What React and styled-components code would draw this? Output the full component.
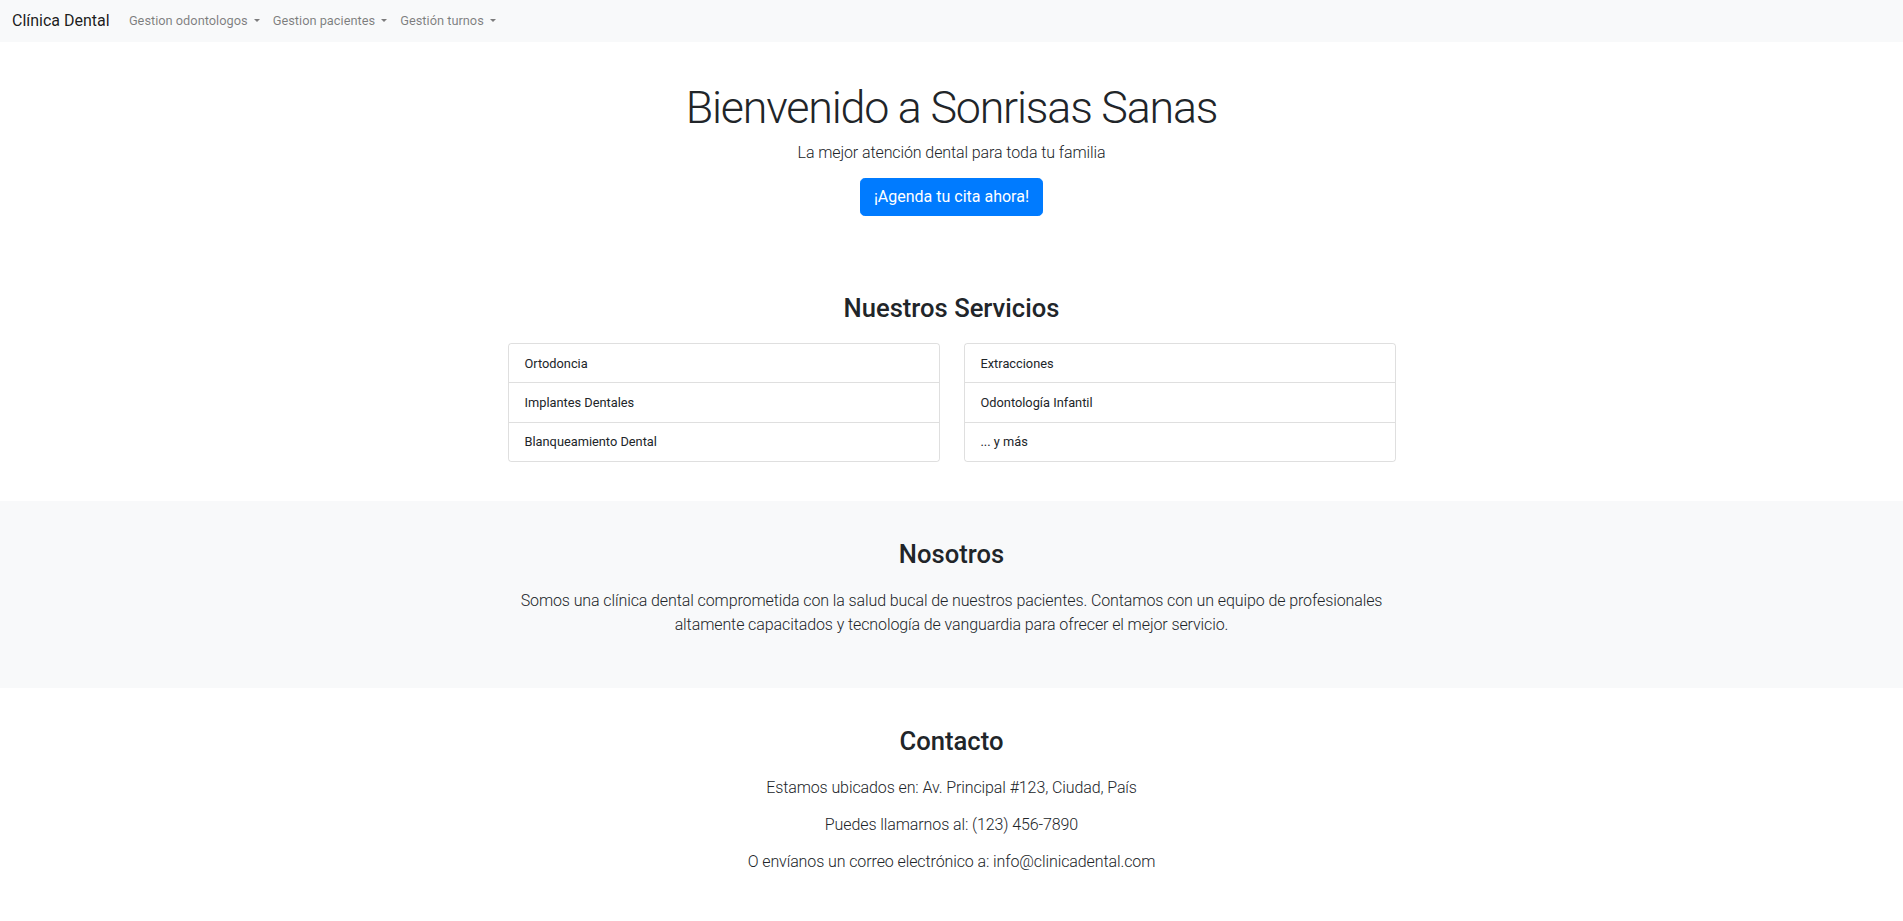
import React from "react";
import styled, { createGlobalStyle } from "styled-components";

const GlobalStyle = createGlobalStyle`
  * { box-sizing: border-box; }
  body {
    margin: 0;
    font-family: Roboto, "Liberation Sans", sans-serif;
    font-size: 12.8px;
    line-height: 1.5;
    color: #212529;
    background: #fff;
  }
`;

const services = [
  ["Ortodoncia", "Implantes Dentales", "Blanqueamiento Dental"],
  ["Extracciones", "Odontología Infantil", "... y más"],
];

const menus = ["Gestion odontologos", "Gestion pacientes", "Gestión turnos"];

export default function App() {
  return (
    <>
      <GlobalStyle />
      <Navbar>
        <Brand href="#">Clínica Dental</Brand>
        <NavList>
          {menus.map((m) => (
            <NavLink key={m} href="#">
              {m}
            </NavLink>
          ))}
        </NavList>
      </Navbar>

      <Hero>
        <Title>Bienvenido a Sonrisas Sanas</Title>
        <Lead>La mejor atención dental para toda tu familia</Lead>
        <CtaButton href="#">¡Agenda tu cita ahora!</CtaButton>
      </Hero>

      <Section>
        <Container>
          <SectionTitle>Nuestros Servicios</SectionTitle>
          <ServiceGrid>
            {services.map((col, i) => (
              <ListGroup key={i}>
                {col.map((s) => (
                  <ListItem key={s}>{s}</ListItem>
                ))}
              </ListGroup>
            ))}
          </ServiceGrid>
        </Container>
      </Section>

      <Section $bg="#f8f9fa">
        <Container>
          <SectionTitle>Nosotros</SectionTitle>
          <Lead>
            Somos una clínica dental comprometida con la salud bucal de nuestros pacientes.
            Contamos con un equipo de profesionales altamente capacitados y tecnología de
            vanguardia para ofrecer el mejor servicio.
          </Lead>
        </Container>
      </Section>

      <Section>
        <Container>
          <SectionTitle>Contacto</SectionTitle>
          <Lead>Estamos ubicados en: Av. Principal #123, Ciudad, País</Lead>
          <Lead>Puedes llamarnos al: (123) 456-7890</Lead>
          <Lead>O envíanos un correo electrónico a: info@clinicadental.com</Lead>
        </Container>
      </Section>
    </>
  );
}

const Navbar = styled.nav`
  display: flex;
  align-items: center;
  height: 41.6px;
  padding: 0 12px;
  background-color: #f8f9fa;
`;

const Brand = styled.a`
  font-size: 16px;
  line-height: 1.5;
  color: rgba(0, 0, 0, 0.9);
  text-decoration: none;
  margin-right: 12.8px;
  white-space: nowrap;
`;

const NavList = styled.div`
  display: flex;
  align-items: center;
`;

const NavLink = styled.a`
  padding: 6.4px;
  color: rgba(0, 0, 0, 0.5);
  text-decoration: none;
  white-space: nowrap;

  &::after {
    content: "";
    display: inline-block;
    margin-left: 0.5em;
    vertical-align: 0.255em;
    border-top: 0.3em solid;
    border-right: 0.3em solid transparent;
    border-left: 0.3em solid transparent;
  }
`;

const Hero = styled.header`
  text-align: center;
  padding: 39px 12px 38.4px;
`;

const Title = styled.h1`
  margin: 0 0 6.4px;
  font-size: 44.8px;
  font-weight: 300;
  line-height: 1.2;
  letter-spacing: -1.2px;
`;

const Lead = styled.p`
  margin: 0 0 12.8px;
  font-size: 16px;
  font-weight: 300;
  line-height: 1.5;
  text-align: center;
  letter-spacing: -0.1px;
`;

const CtaButton = styled.a`
  display: inline-block;
  padding: 6.4px 12.8px;
  font-size: 16px;
  line-height: 1.5;
  color: #fff;
  background-color: #007bff;
  border: 1px solid #007bff;
  border-radius: 4.8px;
  text-decoration: none;
`;

const Section = styled.section`
  padding: 38.4px 0;
  background-color: ${(p) => p.$bg || "transparent"};
`;

const Container = styled.div`
  max-width: 912px;
  margin: 0 auto;
  padding: 0 12px;
`;

const SectionTitle = styled.h2`
  margin: 0 0 19.2px;
  font-size: 25.6px;
  font-weight: 500;
  line-height: 1.2;
  text-align: center;
`;

const ServiceGrid = styled.div`
  display: grid;
  grid-template-columns: 1fr 1fr;
  gap: 24px;
`;

const ListGroup = styled.ul`
  display: flex;
  flex-direction: column;
  margin: 0;
  padding: 0;
  list-style: none;
  border: 1px solid rgba(0, 0, 0, 0.125);
  border-radius: 3.2px;
`;

const ListItem = styled.li`
  padding: 9.6px 16px;
  font-size: 12.8px;
  line-height: 1.5;

  & + & {
    border-top: 1px solid rgba(0, 0, 0, 0.125);
  }
`;
